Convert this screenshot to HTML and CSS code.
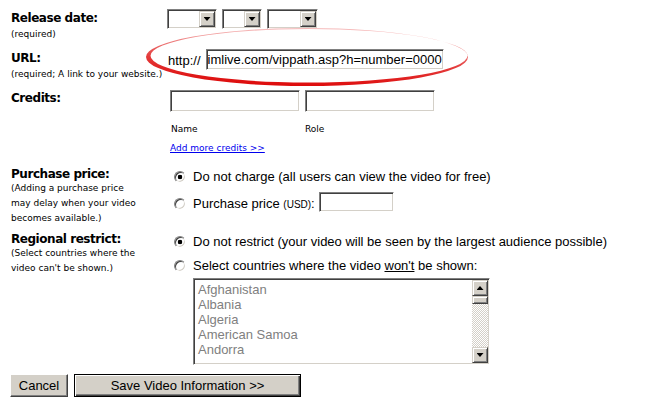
FILE: index.html
```html
<!DOCTYPE html>
<html>
<head>
<meta charset="utf-8">
<link rel="stylesheet" href="styles.css">
</head>
<body>
<div class="page">
  <svg class="ring" viewBox="0 0 340 72" width="340" height="72">
    <defs>
      <linearGradient id="rg" x1="0.2" y1="0" x2="0" y2="1">
        <stop offset="0" stop-color="#f5b8b8"/>
        <stop offset="0.5" stop-color="#e43c3c"/>
        <stop offset="1" stop-color="#dc0000"/>
      </linearGradient>
    </defs>
    <path fill="url(#rg)" fill-rule="evenodd" d="M6,37 a161,29 0 1,0 322,0 a161,29 0 1,0 -322,0 Z M10.5,35.8 a158.5,26.8 0 1,0 317,0 a158.5,26.8 0 1,0 -317,0 Z"/>
  </svg>

  <div class="row row-date">
    <div class="label">
      <div class="title">Release date:</div>
      <div class="note note-first">(required)</div>
    </div>
    <div class="field selects">
      <div class="select sel-month"><span class="arrow down"></span></div>
      <div class="select sel-day"><span class="arrow down"></span></div>
      <div class="select sel-year"><span class="arrow down"></span></div>
    </div>
  </div>

  <div class="row row-url">
    <div class="label">
      <div class="title">URL:</div>
      <div class="note note-first">(required; A link to your website.)</div>
    </div>
    <div class="field url">
      <span class="prefix">http://</span>
      <input class="text-input url-input" type="text" value="imlive.com/vippath.asp?h=number=0000">
    </div>
  </div>

  <div class="row row-credits">
    <div class="label">
      <div class="title">Credits:</div>
    </div>
    <div class="field">
      <div class="credit-inputs">
        <input class="text-input credit-input" type="text">
        <input class="text-input credit-input" type="text">
      </div>
      <div class="credit-labels">
        <span class="credit-name">Name</span>
        <span>Role</span>
      </div>
      <a class="add-link" href="#">Add more credits &gt;&gt;</a>
    </div>
  </div>

  <div class="row row-purchase">
    <div class="label">
      <div class="title">Purchase price:</div>
      <div class="note">(Adding a purchase price</div>
      <div class="note">may delay when your video</div>
      <div class="note">becomes available.)</div>
    </div>
    <div class="field options">
      <label class="option"><input class="radio" type="radio" name="price" checked><span>Do not charge (all users can view the video for free)</span></label>
      <label class="option option-input"><input class="radio" type="radio" name="price"><span class="opt-text">Purchase price <span class="usd">(usd)</span>:</span><input class="text-input price-input" type="text"></label>
    </div>
  </div>

  <div class="row row-regional">
    <div class="label">
      <div class="title">Regional restrict:</div>
      <div class="note">(Select countries where the</div>
      <div class="note">video can't be shown.)</div>
    </div>
    <div class="field options">
      <label class="option"><input class="radio" type="radio" name="region" checked><span>Do not restrict (your video will be seen by the largest audience possible)</span></label>
      <label class="option option-second"><input class="radio" type="radio" name="region"><span>Select countries where the video <u>won't</u> be shown:</span></label>
      <div class="listbox">
        <div class="list-items">
          <div>Afghanistan</div>
          <div>Albania</div>
          <div>Algeria</div>
          <div>American Samoa</div>
          <div>Andorra</div>
        </div>
        <div class="scrollbar">
          <span class="arrow up"></span>
          <span class="thumb"></span>
          <span class="track"></span>
          <span class="arrow down"></span>
        </div>
      </div>
    </div>
  </div>

  <div class="actions">
    <button class="btn btn-cancel" type="button">Cancel</button>
    <button class="btn btn-save" type="button">Save Video Information &gt;&gt;</button>
  </div>
</div>
</body>
</html>
```

FILE: styles.css
```css
* { box-sizing: border-box; }

body {
  margin: 0;
  background: #fff;
  color: #000;
  font: 13px/16px "Liberation Sans", Arial, sans-serif;
}

.page {
  position: relative;
  width: 660px;
  height: 400px;
  padding: 9px 0 0 11px;
  overflow: hidden;
}

.ring {
  position: absolute;
  left: 140px;
  top: 20px;
  pointer-events: none;
}

.row { display: flex; }
.label { width: 156px; flex: none; padding-top: 2px; }
.field { flex: 1; min-width: 0; }

.title {
  font: bold 12px/14px "DejaVu Sans", Verdana, sans-serif;
  letter-spacing: -0.45px;
}
.note {
  font: 9px/15px "DejaVu Sans", Verdana, sans-serif;
  white-space: nowrap;
}
.note-first { margin-top: 2px; }

.row-date { height: 40px; }
.row-url { height: 40px; }
.row-credits { height: 76px; }
.row-purchase { height: 65px; }

/* inset (sunken) classic border */
.select,
.text-input,
.listbox {
  background: #fff;
  border: 1px solid;
  border-color: #808080 #fff #fff #808080;
  box-shadow: inset 1px 1px 0 #404040, inset -1px -1px 0 #d4d0c8;
}

/* selects */
.selects { display: flex; align-self: flex-start; gap: 5px; }
.select {
  height: 20px;
  padding: 1px;
  display: flex;
  justify-content: flex-end;
}
.sel-month { width: 50px; }
.sel-day { width: 40px; }
.sel-year { width: 51px; }

.arrow {
  width: 16px;
  height: 16px;
  flex: none;
  background: #d4d0c8;
  border: 1px solid;
  border-color: #d4d0c8 #404040 #404040 #d4d0c8;
  box-shadow: inset 1px 1px 0 #fff, inset -1px -1px 0 #808080;
  display: flex;
  align-items: center;
  justify-content: center;
}
.arrow::after {
  content: "";
  width: 7px;
  height: 4px;
  background: #000;
}
.arrow.down::after { clip-path: polygon(0 0, 100% 0, 50% 100%); }
.arrow.up::after { clip-path: polygon(50% 0, 100% 100%, 0 100%); }

/* text inputs */
.text-input {
  appearance: none;
  margin: 0;
  padding: 0 1px;
  font: 13px "Liberation Sans", Arial, sans-serif;
  color: #000;
  outline: none;
  border-radius: 0;
}

.url {
  display: flex;
  align-self: flex-start;
  align-items: flex-end;
  padding-left: 1px;
}
.prefix { margin-right: 5px; padding-bottom: 1px; }
.url-input { width: 238px; height: 21px; }

.credit-inputs {
  display: flex;
  gap: 5px;
  padding: 1px 0 0 3px;
}
.credit-input { width: 130px; height: 22px; }

.credit-labels {
  display: flex;
  margin-top: 11px;
  padding-left: 4px;
  font: 9px/12px "DejaVu Sans", Verdana, sans-serif;
}
.credit-name { width: 134px; }

.add-link {
  display: inline-block;
  margin-top: 7px;
  margin-left: 3px;
  font: 9px/12px "DejaVu Sans", Verdana, sans-serif;
  color: #0000ee;
  text-decoration: underline;
}

/* radio options */
.options { padding-top: 4px; }
.option {
  display: flex;
  align-items: center;
  height: 16px;
  white-space: nowrap;
}
.option-input { height: 20px; margin-top: 7px; }
.option-second { margin-top: 8px; }

.radio {
  appearance: none;
  flex: none;
  margin: 0 7px;
  width: 12px;
  height: 12px;
  border-radius: 50%;
  border: 1px solid;
  border-color: #808080 #fff #fff #808080;
  box-shadow: inset 1px 1px 0 #404040, inset -1px -1px 0 #d4d0c8;
  background: #fff;
}
.radio:checked {
  background: radial-gradient(circle, #000 0 2px, #fff 2.6px);
}

.option-input .radio { margin-top: 3px; }
.opt-text { margin-top: 4px; }
.usd { font-size: 10px; text-transform: uppercase; }
.price-input { width: 75px; height: 20px; margin-left: 4px; }

/* listbox */
.listbox {
  margin: 4px 0 0 26px;
  width: 297px;
  height: 87px;
  padding: 1px;
  display: flex;
}
.list-items {
  flex: 1;
  overflow: hidden;
  padding: 2px 0 0 3px;
  color: #808080;
  line-height: 15px;
}
.scrollbar {
  width: 16px;
  display: flex;
  flex-direction: column;
}
.thumb {
  height: 8px;
  background: #d4d0c8;
  border: 1px solid;
  border-color: #d4d0c8 #404040 #404040 #d4d0c8;
  box-shadow: inset 1px 1px 0 #fff, inset -1px -1px 0 #808080;
}
.track {
  flex: 1;
  background: repeating-conic-gradient(#d4d0c8 0 25%, #fff 0 50%) 0 0 / 2px 2px;
}

/* buttons */
.actions {
  display: flex;
  gap: 6px;
  margin: 9px 0 0 -1px;
}
.btn {
  appearance: none;
  height: 23px;
  padding: 0;
  font: 13px "Liberation Sans", Arial, sans-serif;
  color: #000;
  background: #d4d0c8;
  border: 1px solid;
  border-color: #fff #404040 #404040 #fff;
  box-shadow: inset -1px -1px 0 #808080;
  border-radius: 0;
}
.btn-cancel { width: 58px; }
.btn-save {
  width: 227px;
  border: 1px solid #000;
  box-shadow: inset 1px 1px 0 #fff, inset -1px -1px 0 #404040, inset -2px -2px 0 #808080;
}
```
